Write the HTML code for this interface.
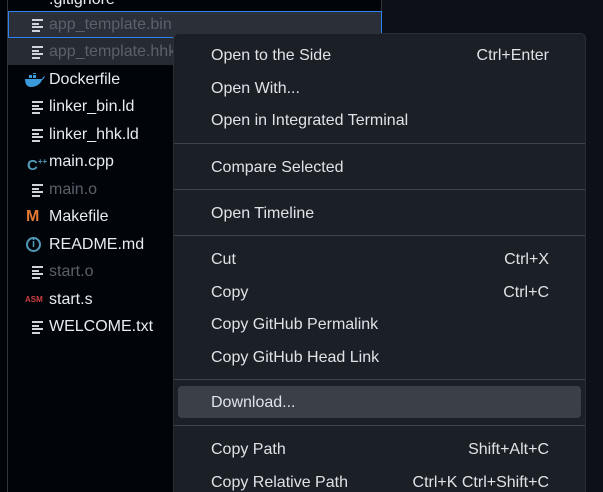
<!DOCTYPE html>
<html style="overflow:hidden;width:603px;height:492px"><head><style>
*{margin:0;padding:0;box-sizing:border-box}
body{width:603px;height:492px;overflow:hidden;background:#0d1117;font-family:"Liberation Sans",sans-serif;position:relative}
.side{position:absolute;left:0;top:0;width:382px;height:492px;background:#010409;border-right:1px solid #30363d}
.guide{position:absolute;left:7px;top:0;width:1px;height:492px;background:#30363d}
.row{position:absolute;left:8px;width:374px;height:27px;font-size:16px;color:#e6edf3;line-height:27px}
.row .t{position:absolute;left:41px}
.dim{color:#5b616a}
.lines{position:absolute;left:24px;top:8px;width:11px}
.lines i{display:block;height:2px;background:#d0d4da;margin-bottom:1.5px}
.menu{position:absolute;left:173px;top:33px;width:413px;height:459px;background:#1b1f26;border-radius:6px 6px 0 0;border:1px solid #2a2f37;border-bottom:none;overflow:hidden}
.it{position:absolute;left:0;width:411px;height:32px;font-size:16px;color:#dfe3e8;line-height:32px}
.it .l{position:absolute;left:37px}
.it .r{position:absolute;right:36px}
.sep{position:absolute;left:0;width:411px;height:1px;background:#3d434c}
</style></head><body>
<div class="side">
<div class="guide"></div>
<div class="row" style="top:-14px"><span class="t">.gitignore</span></div>
<div class="row" style="top:11px;background:#2b2f37;border:1px solid #2f81f7;height:27px"><div class="lines" style="left:23px;top:7px"><i></i><i style="width:7px"></i><i></i><i style="width:8px"></i></div><span class="t dim" style="left:40px;line-height:25px">app_template.bin</span></div>
<div class="row" style="top:38px;background:#262a31"><div class="lines"><i></i><i style="width:7px"></i><i></i><i style="width:8px"></i></div><span class="t dim">app_template.hhk</span></div>
<div class="row" style="top:66px"><svg style="position:absolute;left:16px;top:7px" width="22" height="14" viewBox="0 0 22 14"><path d="M1 6h17c1-2 2-3 3-3-1 2-1 3-3 4-2 5-7 7-11 7-4 0-6-3-6-8z" fill="#3b9ad9"/><rect x="5" y="2" width="3" height="3" fill="#3b9ad9"/><rect x="9" y="2" width="3" height="3" fill="#3b9ad9"/><rect x="9" y="-1" width="3" height="2" fill="#3b9ad9"/></svg><span class="t">Dockerfile</span></div>
<div class="row" style="top:93px"><div class="lines"><i></i><i style="width:7px"></i><i></i><i style="width:8px"></i></div><span class="t">linker_bin.ld</span></div>
<div class="row" style="top:121px"><div class="lines"><i></i><i style="width:7px"></i><i></i><i style="width:8px"></i></div><span class="t">linker_hhk.ld</span></div>
<div class="row" style="top:148px"><span style="position:absolute;left:19px;color:#519aba;font-weight:bold;font-size:15px;line-height:27px">C<sup style="font-size:8px">++</sup></span><span class="t">main.cpp</span></div>
<div class="row" style="top:176px"><div class="lines"><i></i><i style="width:7px"></i><i></i><i style="width:8px"></i></div><span class="t dim">main.o</span></div>
<div class="row" style="top:203px"><span style="position:absolute;left:18px;color:#e37933;font-weight:bold;font-size:16px">M</span><span class="t">Makefile</span></div>
<div class="row" style="top:231px"><span style="position:absolute;left:18px;top:6px;width:15px;height:15px;border:2px solid #519aba;border-radius:50%;color:#519aba;font-size:11px;line-height:11px;text-align:center;font-weight:bold">i</span><span class="t">README.md</span></div>
<div class="row" style="top:258px"><div class="lines"><i></i><i style="width:7px"></i><i></i><i style="width:8px"></i></div><span class="t dim">start.o</span></div>
<div class="row" style="top:286px"><span style="position:absolute;left:17px;color:#cc3e44;font-size:8px;font-weight:bold">ASM</span><span class="t">start.s</span></div>
<div class="row" style="top:313px"><div class="lines"><i></i><i style="width:7px"></i><i></i><i style="width:8px"></i></div><span class="t">WELCOME.txt</span></div>
</div>
<div class="menu">
<div class="it" style="top:6px"><span class="l">Open to the Side</span><span class="r">Ctrl+Enter</span></div>
<div class="it" style="top:39px"><span class="l">Open With...</span></div>
<div class="it" style="top:71px"><span class="l">Open in Integrated Terminal</span></div>
<div class="sep" style="top:109px"></div>
<div class="it" style="top:118px"><span class="l">Compare Selected</span></div>
<div class="sep" style="top:155px"></div>
<div class="it" style="top:164px"><span class="l">Open Timeline</span></div>
<div class="sep" style="top:201px"></div>
<div class="it" style="top:210px"><span class="l">Cut</span><span class="r">Ctrl+X</span></div>
<div class="it" style="top:243px"><span class="l">Copy</span><span class="r">Ctrl+C</span></div>
<div class="it" style="top:275px"><span class="l">Copy GitHub Permalink</span></div>
<div class="it" style="top:308px"><span class="l">Copy GitHub Head Link</span></div>
<div class="sep" style="top:345px"></div>
<div style="position:absolute;left:4px;top:352px;width:403px;height:32px;background:#3a3f48;border-radius:4px"></div>
<div class="it" style="top:353px"><span class="l">Download...</span></div>
<div class="sep" style="top:391px"></div>
<div class="it" style="top:400px"><span class="l">Copy Path</span><span class="r">Shift+Alt+C</span></div>
<div class="it" style="top:433px"><span class="l">Copy Relative Path</span><span class="r">Ctrl+K Ctrl+Shift+C</span></div>
</div>
</body></html>
